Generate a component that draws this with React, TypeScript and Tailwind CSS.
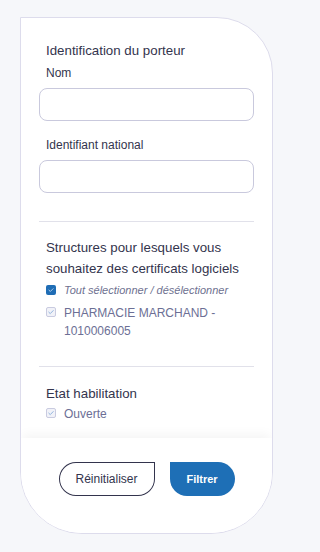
import React from 'react';

function Check({ checked, muted }: { checked?: boolean; muted?: boolean }) {
  if (muted) {
    return (
      <span className="mt-[3px] flex h-[10px] w-[10px] shrink-0 items-center justify-center rounded-[2px] border border-[#c9cbe0] bg-[#f1f2f8]">
        <svg viewBox="0 0 10 10" className="h-[8px] w-[8px]">
          <path d="M2.2 5.2 L4.1 7 L7.8 3.2" fill="none" stroke="#7aa4d6" strokeWidth="1" strokeLinecap="round" strokeLinejoin="round" />
        </svg>
      </span>
    );
  }
  return (
    <span className="flex h-[10px] w-[10px] shrink-0 items-center justify-center rounded-[2px] bg-[#1f6db5]">
      {checked && (
        <svg viewBox="0 0 10 10" className="h-[8px] w-[8px]">
          <path d="M2.4 5.2 L4.2 6.8 L7.6 3.4" fill="none" stroke="#cfe2f5" strokeWidth="1" strokeLinecap="round" strokeLinejoin="round" />
        </svg>
      )}
    </span>
  );
}

function Field({ label }: { label: string }) {
  return (
    <div className="flex flex-col">
      <label className="pl-[7px] text-[12px] leading-[18px] text-[#33344d]">{label}</label>
      <input
        type="text"
        className="mt-[6px] h-[33px] w-full rounded-[8px] border border-[#c9c9dd] bg-white px-3 outline-none"
      />
    </div>
  );
}

export default function App() {
  return (
    <div
      className="min-h-[552px] w-full bg-[#f6f7fa] pt-[17px] pl-[20px]"
      style={{ fontFamily: '"Liberation Sans", Arial, sans-serif' }}
    >
      <div className="flex h-[517px] w-[253px] flex-col overflow-hidden rounded-tr-[56px] rounded-b-[62px] border border-[#dddcec] bg-white">
        {/* Filters */}
        <div className="flex-1 px-[18px] pt-[22px]">
          <h2 className="pl-[7px] text-[13.3px] leading-[21px] text-[#33344d]">Identification du porteur</h2>
          <div className="mt-[3px]">
            <Field label="Nom" />
          </div>
          <div className="mt-[15px]">
            <Field label="Identifiant national" />
          </div>

          <div className="mt-[28px] border-t border-[#e1e1ea]" />

          <h2 className="mt-[15px] pl-[7px] text-[13.3px] leading-[21px] text-[#33344d]">
            Structures pour lesquels vous souhaitez des certificats logiciels
          </h2>
          <div className="mt-[3px] flex items-center gap-[8px] pl-[7px]">
            <Check checked />
            <span className="text-[11px] italic leading-[16px] text-[#6e7190]">
              Tout sélectionner / désélectionner
            </span>
          </div>
          <div className="mt-[6px] flex items-start gap-[8px] pl-[7px]">
            <Check muted />
            <span className="text-[12px] leading-[18px] text-[#6c6f95]">PHARMACIE MARCHAND - 1010006005</span>
          </div>

          <div className="mt-[26px] border-t border-[#e1e1ea]" />

          <h2 className="mt-[16px] pl-[7px] text-[13.3px] leading-[21px] text-[#33344d]">Etat habilitation</h2>
          <div className="mt-[1px] flex items-start gap-[8px] pl-[7px]">
            <Check muted />
            <span className="text-[12px] leading-[18px] text-[#6c6f95]">Ouverte</span>
          </div>
        </div>

        {/* Actions */}
        <div className="flex h-[95px] shrink-0 items-start justify-center gap-[15px] bg-white pt-[24px] shadow-[0_-6px_10px_-2px_rgba(0,0,0,0.045)]">
          <button className="h-[34px] w-[96px] rounded-l-full rounded-tr-[6px] rounded-br-full border border-[#33344d] bg-white text-[12px] text-[#33344d]">
            Réinitialiser
          </button>
          <button className="h-[34px] w-[65px] rounded-r-full rounded-tl-[6px] rounded-bl-full bg-[#1e6fb6] text-[11px] font-bold text-white">
            Filtrer
          </button>
        </div>
      </div>
    </div>
  );
}
